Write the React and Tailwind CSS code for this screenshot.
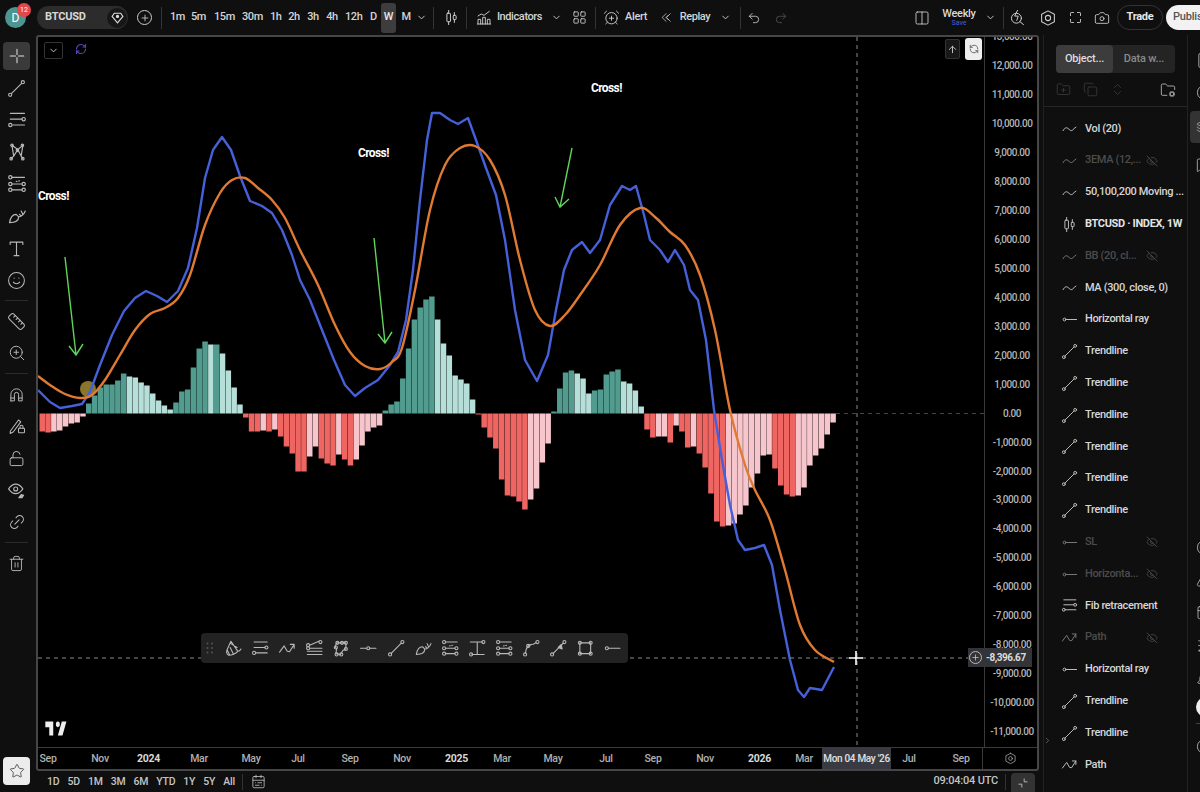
import React from "react";
import { ChevronDown, Plus, LayoutGrid, AlarmClockPlus, Undo2, Redo2, Columns2, Camera, LockOpen, Link2, Trash2, Star, Smile, Ruler, ZoomIn, EyeOff, ArrowUp, RefreshCw, CalendarRange, FolderPlus, Copy, ChevronsUpDown, FolderCog, ChevronRight, FileText, MessageSquare, Layers, Bell, Calendar, Rss, Triangle, Target, CircleHelp, RefreshCcw } from "lucide-react";

const Ic = ({ children, s = 18, w = 1.4, c = "" }) => (
  <svg width={s} height={s} viewBox="0 0 24 24" fill="none" stroke="currentColor" strokeWidth={w} strokeLinecap="round" strokeLinejoin="round" className={c}>{children}</svg>
);
const Dot = ({ x, y, r = 2 }) => <circle cx={x} cy={y} r={r} />;
const Cross = (p) => <Ic {...p}><path d="M12 3v7M12 14v7M3 12h7M14 12h7" /></Ic>;
const Trend = (p) => <Ic {...p}><Dot x={4} y={20} /><path d="M5.500 18.500 18.500 5.500" /><Dot x={20} y={4} /></Ic>;
const Ray = (p) => <Ic {...p}><Dot x={5} y={12} /><path d="M7 12h15" /></Ic>;
const RaySeg = (p) => <Ic {...p}><path d="M2 12h8M14 12h8" /><Dot x={12} y={12} /></Ic>;
const Fib = (p) => <Ic {...p}><path d="M4 4h17M4 11h14M7 18h14" /><Dot x={20} y={11} /><Dot x={4} y={18} /></Ic>;
const Wave = (p) => <Ic {...p}><path d="M3 15c2-4 4.500-5 7-3s4 4 6 2.500 3-3.500 5-4.500" /></Ic>;
const PathI = (p) => <Ic {...p}><path d="M2 17 8 9l4 7 3 .500 6-9.500M16 7h5v5" /></Ic>;
const Candle = (p) => <Ic {...p}><path d="M8 2v4M8 18v4M16 5v4M16 15v4" /><rect x="5.500" y="6" width="5" height="12" rx="1" /><rect x="14.500" y="9" width="4" height="6" rx="1" /></Ic>;
const Pattern = (p) => <Ic {...p}><path d="M6 4 8 17l5-8 4 8 2-13-6 5L6 4ZM8 17l-3 3M17 17l2 3" /><Dot x={6} y={4} r={1.500} /><Dot x={18.500} y={4} r={1.500} /><Dot x={12.500} y={10} r={1.500} /><Dot x={5} y={20} r={1.500} /><Dot x={19} y={20} r={1.500} /></Ic>;
const Fork = (p) => <Ic {...p}><path d="M6 4h15M6 12h12M6 19h12" /><Dot x={4} y={4} /><Dot x={4} y={12} /><Dot x={20} y={12} /><Dot x={4} y={19} /><Dot x={20} y={19} /><path d="M11 9l5-1" strokeDasharray="1 2" /></Ic>;
const Brush = (p) => <Ic {...p}><path d="M3 20c1-6 3-10 8-10l3 3c0 5-5 7-11 7ZM14 13c2 0 6-2 8-7M15 10l2 2M17 6l2 4" /></Ic>;
const TextT = (p) => <Ic {...p}><path d="M4 7V4h16v3M12 4v17M9 21h6" /></Ic>;
const PencilLock = (p) => <Ic {...p}><path d="M3 19 14 4l3 2.500L7 20l-4 2v-3Z" /><rect x="14" y="15" width="8" height="6" rx="1" /><path d="M16 15v-2a2 2 0 0 1 4 0v2" /></Ic>;
const EyeBrush = (p) => <Ic {...p}><path d="M2 10s4-6 9-6 9 6 9 6-4 6-9 6-9-6-9-6Z" /><circle cx="11" cy="10" r="2.500" /><path d="M15 21l3-4 3 1-2 3-4 0Z" fill="currentColor" /></Ic>;
const Fs = (p) => <Ic {...p}><path d="M4 9V5a1 1 0 0 1 1-1h4M15 4h4a1 1 0 0 1 1 1v4M20 15v4a1 1 0 0 1-1 1h-4M9 20H5a1 1 0 0 1-1-1v-4" /></Ic>;
const Indicators = (p) => <Ic {...p}><path d="M3 21V14h4v7M10 21V11h4v10M17 21V14h4v7M2 21h20M3 9l5-3 4 2 8-6" /></Ic>;
const Replay = (p) => <Ic {...p}><path d="M11 5 4 12l7 7M19 5l-7 7 7 7M15 8l-4 4 4 4" /></Ic>;
const Brushes = (p) => <Ic {...p}><path d="M9 3 4 14c-1 3 0 6 2 7 4 0 9-2 12-5L9 3Zm-5 11 3 6m1-9 4 8m-3-13 8 5M18 16c2 0 3-1 4-3" /></Ic>;
const FibExt = (p) => <Ic {...p}><path d="M3 20h19M3 16h19M6 12h16M6 8l12-5" /><Dot x={4} y={8} /><Dot x={4} y={12} /><Dot x={20} y={4} /></Ic>;
const Polygon = (p) => <Ic {...p}><path d="M6 5h12v8l-4 2-3 5-6-1 1-6-2-3 2-5Z" /><Dot x={7} y={5} /><Dot x={18} y={5} /><Dot x={13} y={5} /><Dot x={6} y={20} /><Dot x={12} y={20} /><Dot x={5} y={11} /><Dot x={18} y={13} /></Ic>;
const IBeam = (p) => <Ic {...p}><path d="M3 4h16M12 4v16M5 20h16" /><Dot x={20} y={4} /><Dot x={4} y={20} /></Ic>;
const Curve = (p) => <Ic {...p}><Dot x={4} y={20} /><path d="M4.500 18c.500-6 4-10 8-11" /><Dot x={20} y={4} /><path d="M14 7l4-2" /><Dot x={8} y={9} /></Ic>;
const Arrowed = (p) => <Ic {...p}><Dot x={4} y={20} /><path d="M5.500 18.500 18.500 5.500" /><Dot x={20} y={4} /><path d="M12 11l4-4 1 6-5-2Z" fill="currentColor" /></Ic>;
const RectI = (p) => <Ic {...p}><rect x="5" y="5" width="14" height="14" /><Dot x={5} y={5} /><Dot x={19} y={5} /><Dot x={5} y={19} /><Dot x={19} y={19} /></Ic>;
const Corners = (p) => <Ic {...p}><path d="M14 5v5h5M10 19v-5H5" /></Ic>;
const HexGear = (p) => <Ic {...p}><path d="M12 2.500 20.500 7v10L12 21.500 3.500 17V7L12 2.500Z" /><circle cx="12" cy="12" r="3.500" /></Ic>;
const Magnet = (p) => <Ic {...p}><path d="M4 21v-9a8 8 0 0 1 16 0v9h-5v-9a3 3 0 0 0-6 0v9H4ZM4 17h5M15 17h5" /></Ic>;
const BoltSearch = (p) => <Ic {...p}><circle cx="10.500" cy="13" r="7" /><path d="M15.500 18l5 4M12 2 8 10h5l-2 6" /></Ic>;
const Sep = ({ c = "" }) => <div className={`w-px h-[22px] bg-[#333] shrink-0 ${c}`} />;

const G = "G", L = "L", R = "R", P = "P";
const seq = (t, ...v) => v.map((h) => [h, t]);
const bars = [
  ...seq(R, -18, -19), ...seq(P, -18, -17, -13, -10, -9, -3),
  ...seq(G, 10, 18, 26, 29, 29, 33, 40), ...seq(L, 37, 36, 31, 28, 20, 13, 8, 4),
  ...seq(G, 11, 22, 24, 46, 65, 72), ...seq(L, 69), ...seq(G, 69), ...seq(L, 60, 43, 26, 9),
  ...seq(R, -4, -18, -18), ...seq(P, -17), ...seq(R, -18), ...seq(P, -16), ...seq(R, -23, -33, -40, -58, -58), ...seq(P, -43, -33), ...seq(R, -45, -50, -52), ...seq(P, -41), ...seq(R, -46, -52), ...seq(P, -46, -32, -18, -14, -12),
  ...seq(G, 3, 9, 12, 35, 65, 94, 106, 114, 117), ...seq(L, 94, 70, 58, 38, 34, 30, 14),
  ...seq(R, -1, -14, -24, -35, -66, -82, -83, -88, -96), ...seq(P, -86, -75, -49, -30),
  ...seq(G, 2, 25, 41, 43), ...seq(L, 40, 35, 20), ...seq(G, 23, 24, 39, 42, 44), ...seq(L, 32, 30, 23, 7),
  ...seq(R, -16, -24), ...seq(P, -23, -23), ...seq(R, -29), ...seq(P, -12), ...seq(R, -18, -34), ...seq(P, -33), ...seq(R, -40, -54, -80, -108, -113), ...seq(P, -112, -110, -101, -92, -74, -60, -42, -41), ...seq(R, -55, -72, -81, -83), ...seq(P, -82, -74, -52, -42, -35, -21, -9),
];
const col = { G: "#519c8f", L: "#b7dfd9", R: "#ee6562", P: "#f6c6cc" };
const blue = "38,390 50,402 60,408 72,406 82,404 90,392 100,365 112,335 124,311 135,298 146,291 157,296 167,302 178,291 188,268 197,228 205,178 213,150 222,137 231,150 240,176 250,201 262,206 272,213 282,230 292,255 300,280 310,300 322,330 334,360 345,385 355,396 365,388 378,380 390,365 398,352 406,320 413,270 420,200 427,140 432,113 440,113 450,120 458,124 468,118 476,140 486,168 496,195 505,240 515,310 525,360 537,381 548,355 556,310 564,270 572,250 582,242 590,253 600,240 610,205 622,186 630,190 636,186 644,215 650,240 660,250 668,262 675,250 684,265 690,290 698,300 706,340 714,410 722,460 730,505 738,540 745,550 755,548 764,545 772,565 780,610 790,660 798,690 804,697 810,688 822,690 834,667";
const orange = "38,376 50,385 65,394 80,398 92,395 105,380 120,355 135,330 150,314 165,308 178,298 190,275 205,225 220,193 232,180 245,178 258,188 272,200 285,218 300,250 318,285 335,325 350,352 365,366 380,369 392,362 402,348 415,290 430,210 445,165 460,148 475,146 490,160 505,195 520,260 535,310 550,326 565,315 580,295 600,265 620,225 640,208 655,217 670,232 685,245 700,275 715,330 730,410 745,465 755,490 770,520 785,570 800,625 815,650 834,662";
const smooth = (str) => {
  const p = str.split(" ").map((s) => s.split(",").map(Number));
  let d = `M${p[0][0]} ${p[0][1]}`;
  for (let i = 0; i < p.length - 1; i++) {
    const a = p[Math.max(i - 1, 0)], b = p[i], c = p[i + 1], e = p[Math.min(i + 2, p.length - 1)];
    d += `C${b[0] + (c[0] - a[0]) / 6} ${b[1] + (c[1] - a[1]) / 6} ${c[0] - (e[0] - b[0]) / 6} ${c[1] - (e[1] - b[1]) / 6} ${c[0]} ${c[1]}`;
  }
  return d;
};

const Chart = () => (
  <svg width="946" height="710" viewBox="38 37 946 710" className="absolute inset-0">
    {bars.map(([h, t], i) => (
      <rect key={i} x={39.5 + i * 5.815} y={h > 0 ? 413.500 - h : 413.500} width="5.500" height={Math.abs(h)} fill={col[t]} />
    ))}
    <circle cx="88" cy="389" r="8" fill="#a08b35" fillOpacity="0.85" />
    <polyline points={blue} fill="none" stroke="#4560d8" strokeWidth="2.400" strokeLinejoin="round" />
    <path d={smooth(orange)} fill="none" stroke="#e07a32" strokeWidth="2.400" />
    <g stroke="#5fd65a" strokeWidth="1.400" fill="none">
      <path d="M65 257 76 355M69 346 76 355 83 344" />
      <path d="M374 238 385 343M378 334 385 343 392 332" />
      <path d="M572 148 560 207M555 197 560 207 569 199" />
    </g>
    <path d="M836 413.500H984" stroke="#444" strokeDasharray="4 4" />
    <path d="M38 658H984" stroke="#8a8a8a" strokeDasharray="4 4" />
    <path d="M857 37V747" stroke="#8a8a8a" strokeDasharray="4 4" />
    <path d="M856 651v14M849 658h14" stroke="#fff" strokeWidth="1.600" />
    <path d="M14 6H2v6h6v9h6V6Zm14 15h-7l6-15h7l-6 15Zm-7-9a3 3 0 1 0 0-6 3 3 0 0 0 0 6Z" fill="#eee" transform="translate(44 716) scale(0.66 0.93)" />
  </svg>
);

const Note = ({ children, c }) => <div className={`absolute text-white font-bold text-[12px] tracking-[-0.6px] ${c}`}>{children}</div>;

const TF = ({ t, c = "" }) => <span className={`shrink-0 font-medium text-[11px] tracking-[-0.4px] text-[#d4d4d4] text-center ${c}`}>{t}</span>;

const TopBar = () => (
  <div className="h-[35px] flex items-center shrink-0 text-[#cfcfcf]">
    <div className="relative ml-[5px] w-[21px] h-[21px] rounded-full bg-[#4e9490] text-white text-[12px] flex items-center justify-center shrink-0">
      D
      <span className="absolute -top-[4px] -right-[5px] w-[14px] h-[14px] rounded-full bg-[#e2474c] text-[7px] text-white flex items-center justify-center">12</span>
    </div>
    <div className="ml-[11px] w-[91px] h-[23px] rounded-full bg-[#2c2c2c] flex items-center justify-between pl-[8px] shrink-0">
      <span className="text-[11px] font-bold text-[#d8d8d8] tracking-[-0.2px]">BTCUSD</span>
      <span className="w-[20px] h-[20px] rounded-full bg-[#171717] flex items-center justify-center mr-[1px]">
        <svg width="13" height="13" viewBox="0 0 24 24" fill="none" stroke="#ddd" strokeWidth="2"><path d="M6 4h12l4 6-10 12L2 10l4-6Z" /><circle cx="12" cy="10" r="2" fill="#ddd" /></svg>
      </span>
    </div>
    <span className="ml-[9px] w-[15px] h-[15px] rounded-full border border-[#ccc] flex items-center justify-center shrink-0"><Plus size={10} /></span>
    <Sep c="ml-[9px]" />
    <TF t="1m" c="ml-[8px] w-[15px]" />
    <TF t="5m" c="ml-[6px] w-[15px]" />
    <TF t="15m" c="ml-[8px] w-[19px]" />
    <TF t="30m" c="ml-[9px] w-[20px]" />
    <TF t="1h" c="ml-[8px] w-[11px]" />
    <TF t="2h" c="ml-[7px] w-[12px]" />
    <TF t="3h" c="ml-[7px] w-[12px]" />
    <TF t="4h" c="ml-[7px] w-[12px]" />
    <TF t="12h" c="ml-[7px] w-[17px]" />
    <TF t="D" c="ml-[8px] w-[6px]" />
    <span className="ml-[5px] w-[15px] h-[30px] bg-[#3d3d3d] rounded-[3px] flex items-center justify-center text-[11px] font-medium text-[#e8e8e8] shrink-0">W</span>
    <TF t="M" c="ml-[5px] w-[10px]" />
    <ChevronDown size={11} className="ml-[5px] shrink-0" />
    <Sep c="ml-[6px]" />
    <Candle s={17} c="ml-[9px] shrink-0" />
    <Sep c="ml-[6px]" />
    <Indicators s={16} c="ml-[9px] shrink-0" />
    <TF t="Indicators" c="ml-[4px] w-[47px]" />
    <ChevronDown size={11} className="ml-[8px] shrink-0" />
    <LayoutGrid size={15} strokeWidth={1.4} className="ml-[10px] shrink-0" />
    <Sep c="ml-[8px]" />
    <AlarmClockPlus size={17} strokeWidth={1.3} className="ml-[7px] shrink-0" />
    <TF t="Alert" c="ml-[4px] w-[24px]" />
    <Replay s={13} c="ml-[12px] shrink-0" />
    <TF t="Replay" c="ml-[6px] w-[32px]" />
    <ChevronDown size={11} className="ml-[9px] shrink-0" />
    <Sep c="ml-[9px]" />
    <Undo2 size={14} strokeWidth={1.4} className="ml-[6px] shrink-0" />
    <Redo2 size={14} strokeWidth={1.4} className="ml-[13px] shrink-0 text-[#555]" />
    <Columns2 size={16} strokeWidth={1.3} className="ml-[126px] shrink-0" />
    <div className="ml-[12px] w-[34px] flex flex-col items-center shrink-0 leading-none">
      <span className="text-[11px] font-medium tracking-[-0.3px] text-[#d8d8d8]">Weekly</span>
      <span className="text-[7px] text-[#3f5fe0] mt-[1px]">Save</span>
    </div>
    <ChevronDown size={11} className="ml-[9px] shrink-0" />
    <Sep c="ml-[7px]" />
    <BoltSearch s={17} c="ml-[5px] shrink-0" />
    <HexGear s={18} c="ml-[13px] shrink-0" />
    <Fs s={15} c="ml-[11px] shrink-0" />
    <Camera size={16} strokeWidth={1.3} className="ml-[11px] shrink-0" />
    <span className="ml-[7px] w-[46px] h-[25px] rounded-full border border-[#333] flex items-center justify-center text-[11px] font-bold tracking-[-0.3px] text-[#e8e8e8] shrink-0">Trade</span>
    <span className="ml-[3px] w-[50px] h-[25px] rounded-l-full bg-[#f2f2f2] pl-[7px] flex items-center text-[11px] font-medium tracking-[-0.2px] text-[#555] shrink-0">Publish</span>
  </div>
);

const Tool = ({ children, c = "" }) => <div className={`h-[32px] flex items-center justify-center text-[#b8b8b8] ${c}`}>{children}</div>;
const TSep = () => <div className="h-px mx-[2px] my-[4px] bg-[#2a2a2a]" />;
const LeftBar = () => (
  <div className="w-[36px] shrink-0 flex flex-col pt-[7px] pr-[6px] pl-[3px]">
    <div className="h-[28px] rounded-[4px] bg-[#3a3a3a] flex items-center justify-center text-[#ddd] mb-[2px]"><Cross s={18} /></div>
    <Tool><Trend s={19} /></Tool>
    <Tool><Fib s={20} /></Tool>
    <Tool><Pattern s={20} /></Tool>
    <Tool><Fork s={20} /></Tool>
    <Tool><Brush s={20} /></Tool>
    <Tool><TextT s={19} /></Tool>
    <Tool><Smile size={19} strokeWidth={1.3} /></Tool>
    <TSep />
    <Tool><Ruler size={19} strokeWidth={1.3} /></Tool>
    <Tool><ZoomIn size={18} strokeWidth={1.3} /></Tool>
    <TSep />
    <Tool><Magnet s={17} /></Tool>
    <Tool><PencilLock s={18} /></Tool>
    <Tool><LockOpen size={17} strokeWidth={1.4} /></Tool>
    <Tool><EyeBrush s={19} /></Tool>
    <Tool><Link2 size={18} strokeWidth={1.4} className="-rotate-45" /></Tool>
    <TSep />
    <Tool><Trash2 size={17} strokeWidth={1.3} /></Tool>
    <div className="mt-auto mb-[7px] h-[28px] rounded-[4px] bg-[#ececec] flex items-center justify-center text-[#444]"><Star size={16} strokeWidth={1.3} /></div>
  </div>
);

const prices = ["13,000.00","12,000.00","11,000.00","10,000.00","9,000.00","8,000.00","7,000.00","6,000.00","5,000.00","4,000.00","3,000.00","2,000.00","1,000.00","0.00","-1,000.00","-2,000.00","-3,000.00","-4,000.00","-5,000.00","-6,000.00","-7,000.00","-8,000.00","-9,000.00","-10,000.00","-11,000.00"];

const PriceAxis = () => (
  <div className="w-[55px] shrink-0 border-l border-[#3a3a3a] overflow-hidden">
    <div className="-mt-[15px] flex flex-col">
      {prices.map((p) => (
        <div key={p} className="h-[28.97px] shrink-0 flex items-center justify-center text-[10px] font-medium tracking-[-0.45px] text-[#b5b5b5]">{p}</div>
      ))}
    </div>
  </div>
);

const TimeCell = ({ t, c, b }) => <span className={`shrink-0 text-center text-[10.500px] tracking-[-0.3px] ${b ? "font-bold text-[#d8d8d8]" : "font-medium text-[#b0b0b0]"} ${c}`}>{t}</span>;
const TimeAxis = () => (
  <div className="h-[22px] shrink-0 border-t border-[#3a3a3a] flex items-center">
    <TimeCell t="Sep" c="w-[20px]" />
    <TimeCell t="Nov" c="ml-[32px] w-[20px]" />
    <TimeCell t="2024" c="ml-[27px] w-[20px]" b />
    <TimeCell t="Mar" c="ml-[32px] w-[20px]" />
    <TimeCell t="May" c="ml-[32px] w-[20px]" />
    <TimeCell t="Jul" c="ml-[27px] w-[20px]" />
    <TimeCell t="Sep" c="ml-[32px] w-[20px]" />
    <TimeCell t="Nov" c="ml-[32px] w-[20px]" />
    <TimeCell t="2025" c="ml-[33px] w-[20px]" b />
    <TimeCell t="Mar" c="ml-[27px] w-[20px]" />
    <TimeCell t="May" c="ml-[31px] w-[20px]" />
    <TimeCell t="Jul" c="ml-[33px] w-[20px]" />
    <TimeCell t="Sep" c="ml-[27px] w-[20px]" />
    <TimeCell t="Nov" c="ml-[32px] w-[20px]" />
    <TimeCell t="2026" c="ml-[33px] w-[20px]" b />
    <TimeCell t="Mar" c="ml-[26px] w-[20px]" />
    <span className="ml-[8px] w-[69px] h-full shrink-0 bg-[#3a3b42] text-[10px] font-medium tracking-[-0.3px] whitespace-nowrap text-[#e0e0e0] flex items-center justify-center">Mon 04 May '26</span>
    <TimeCell t="Jul" c="ml-[8px] w-[20px]" />
    <TimeCell t="Sep" c="ml-[32px] w-[20px]" />
    <div className="ml-auto w-[55px] h-full border-l border-[#3a3a3a] flex items-center justify-center text-[#aaa]"><HexGear s={13} /></div>
  </div>
);

const FloatBar = () => (
  <div className="absolute left-[163px] top-[596px] w-[427px] h-[30px] rounded-[4px] bg-[#222] flex items-center pl-[5px] text-[#b9b9b9]">
    <svg width="8" height="12" viewBox="0 0 8 12" fill="#555" className="shrink-0"><circle cx="1.500" cy="1.500" r="1"/><circle cx="6" cy="1.500" r="1"/><circle cx="1.500" cy="6" r="1"/><circle cx="6" cy="6" r="1"/><circle cx="1.500" cy="10.500" r="1"/><circle cx="6" cy="10.500" r="1"/></svg>
    <div className="flex items-center ml-[10px] gap-[8.6px]">
      <Brushes s={18.500} /><Fib s={18.500} /><PathI s={18.500} /><FibExt s={18.500} /><Polygon s={18.500} /><RaySeg s={18.500} /><Trend s={18.500} /><Brush s={18.500} /><Fork s={18.500} /><IBeam s={18.500} /><Fork s={18.500} /><Curve s={18.500} /><Arrowed s={18.500} /><RectI s={18.500} /><Ray s={18.500} />
    </div>
  </div>
);

const ChartFrame = () => (
  <div className="h-[736px] shrink-0 border-2 border-[#464646] rounded-[3px] flex flex-col bg-black relative overflow-hidden">
    <div className="flex flex-1 min-h-0">
      <div className="w-[946px] relative shrink-0">
        <Chart />
        <Note c="left-0 top-[150px]">Cross!</Note>
        <Note c="left-[320px] top-[107px]">Cross!</Note>
        <Note c="left-[553px] top-[42px]">Cross!</Note>
        <span className="absolute left-[6px] top-[5px] w-[19px] h-[17px] border border-[#333] rounded-[2px] flex items-center justify-center text-[#ccc]"><ChevronDown size={11} /></span>
        <RefreshCw size={12} strokeWidth={2.4} className="absolute left-[37px] top-[6px] text-[#5a48b8]" />
        <span className="absolute left-[907px] top-[2px] w-[15px] h-[20px] border border-[#333] rounded-[2px] bg-[#181818] flex items-center justify-center text-[#ccc]"><ArrowUp size={11} /></span>
        <span className="absolute left-[927px] top-[1px] w-[17px] h-[22px] rounded-[3px] bg-[#eee] flex items-center justify-center text-[#555]"><RefreshCcw size={10} /></span>
        <FloatBar />
      </div>
      <PriceAxis />
    </div>
    <TimeAxis />
    <div className="absolute left-[930px] top-[611px] w-[64px] h-[19px] bg-[#333438] flex items-center pl-[1px]">
      <span className="w-[13px] h-[13px] rounded-full border border-[#bbb] text-[#ccc] flex items-center justify-center shrink-0"><Plus size={9} /></span>
      <span className="ml-[4px] text-[10px] font-bold tracking-[-0.45px] text-[#ddd]">-8,396.67</span>
    </div>
  </div>
);

const items = [
  [Wave, "Vol (20)"], [Wave, "3EMA (12,...", 1], [Wave, "50,100,200 Moving ..."], [Candle, "BTCUSD · INDEX, 1W", 0, 1],
  [Wave, "BB (20, cl...", 1], [Wave, "MA (300, close, 0)"], [Ray, "Horizontal ray"], [Trend, "Trendline"], [Trend, "Trendline"], [Trend, "Trendline"], [Trend, "Trendline"], [Trend, "Trendline"], [Trend, "Trendline"],
  [Ray, "SL", 1], [Ray, "Horizonta...", 1], [Fib, "Fib retracement"], [PathI, "Path", 1], [Ray, "Horizontal ray"], [Trend, "Trendline"], [Trend, "Trendline"], [PathI, "Path"],
];

const Panel = () => (
  <div className="w-[145px] shrink-0 ml-[4px] border-x border-[#222] flex flex-col relative">
    <div className="mx-[12px] mt-[10px] h-[28px] w-[119px] rounded-[4px] bg-[#242424] flex text-[11px] shrink-0">
      <span className="w-[57px] rounded-[4px] bg-[#3c3c3c] text-[#ddd] font-medium flex items-center justify-center tracking-[-0.2px]">Object...</span>
      <span className="flex-1 text-[#8a8a8a] font-medium flex items-center justify-center tracking-[-0.2px]">Data w...</span>
    </div>
    <div className="h-[34px] shrink-0 flex items-center pl-[12px] text-[#3c3c3c] border-b border-[#262626]">
      <FolderPlus size={15} strokeWidth={1.3} />
      <Copy size={15} strokeWidth={1.3} className="ml-[12px]" />
      <ChevronsUpDown size={15} strokeWidth={1.3} className="ml-[12px]" />
      <FolderCog size={16} strokeWidth={1.3} className="ml-[35px] text-[#bbb]" />
    </div>
    <div className="flex flex-col pt-[6px]">
      {items.map(([I, t, hid, b], i) => (
        <div key={i} className="h-[31.800px] shrink-0 flex items-center">
          <span className={`w-[20px] ml-[15px] flex justify-center shrink-0 ${hid ? "text-[#777]" : "text-[#bdbdbd]"}`}><I s={17} /></span>
          <span className={`ml-[6px] text-[11px] whitespace-nowrap tracking-[-0.35px] ${hid ? "text-[#4c4c4c] font-medium" : b ? "text-[#e4e4e4] font-bold" : "text-[#d6d6d6] font-medium"}`}>{t}</span>
          {hid ? <EyeOff size={12} strokeWidth={1.4} className="absolute left-[102px] text-[#555]" /> : null}
        </div>
      ))}
    </div>
    <ChevronRight size={9} className="absolute -left-[1px] top-[701px] text-[#777]" />
  </div>
);

const Strip = () => (
  <div className="flex-1 overflow-hidden flex flex-col pl-[8px] text-[#b5b5b5]">
    <FileText size={17} strokeWidth={1.3} className="mt-[17px] shrink-0" />
    <CircleHelp size={17} strokeWidth={1.3} className="mt-[15px] shrink-0" />
    <div className="mt-[10px] -ml-[6px] w-[20px] h-[32px] rounded-[4px] bg-[#333] flex items-center pl-[6px] shrink-0"><Layers size={16} strokeWidth={1.3} /></div>
    <MessageSquare size={16} strokeWidth={1.3} className="mt-[14px] shrink-0" />
    <Target size={17} strokeWidth={1.3} className="mt-[366px] shrink-0" />
    <Triangle size={16} strokeWidth={1.3} className="mt-[16px] shrink-0" />
    <Calendar size={16} strokeWidth={1.3} className="mt-[16px] shrink-0" />
    <Rss size={16} strokeWidth={1.3} className="mt-[18px] shrink-0" />
    <Bell size={16} strokeWidth={1.3} className="mt-[18px] shrink-0" />
    <span className="mt-[9px] w-[20px] h-[20px] rounded-full bg-[#eee] shrink-0" />
    <div className="mt-[6px] h-px bg-[#444] shrink-0" />
    <CircleHelp size={17} strokeWidth={1.3} className="mt-[14px] shrink-0" />
  </div>
);

const BottomBar = () => (
  <div className="flex-1 min-h-0 flex items-center text-[#c4c4c4]">
    <div className="ml-[11px] flex items-center gap-[8px] text-[10.500px] font-medium tracking-[-0.2px]">
      {["1D","5D","1M","3M","6M","YTD","1Y","5Y","All"].map((t) => <span key={t}>{t}</span>)}
    </div>
    <div className="ml-[7px] w-px h-[16px] bg-[#333]" />
    <CalendarRange size={15} strokeWidth={1.3} className="ml-[8px]" />
    <span className="ml-auto text-[11px] font-medium tracking-[-0.2px] mr-[7px]">09:04:04 UTC</span>
    <div className="w-px h-[16px] bg-[#333]" />
    <span className="ml-[5px] mr-[4px] w-[24px] h-[19px] self-end rounded-t-[4px] bg-[#333] flex items-center justify-center text-[#ccc]"><Corners s={14} /></span>
  </div>
);

export default function App() {
  return (
    <div className="w-[1200px] h-[792px] overflow-hidden bg-[#0f0f0f] flex flex-col [font-family:Roboto,sans-serif]">
      <TopBar />
      <div className="flex flex-1 min-h-0">
        <LeftBar />
        <div className="w-[1003px] shrink-0 flex flex-col">
          <ChartFrame />
          <BottomBar />
        </div>
        <Panel />
        <Strip />
      </div>
    </div>
  );
}
